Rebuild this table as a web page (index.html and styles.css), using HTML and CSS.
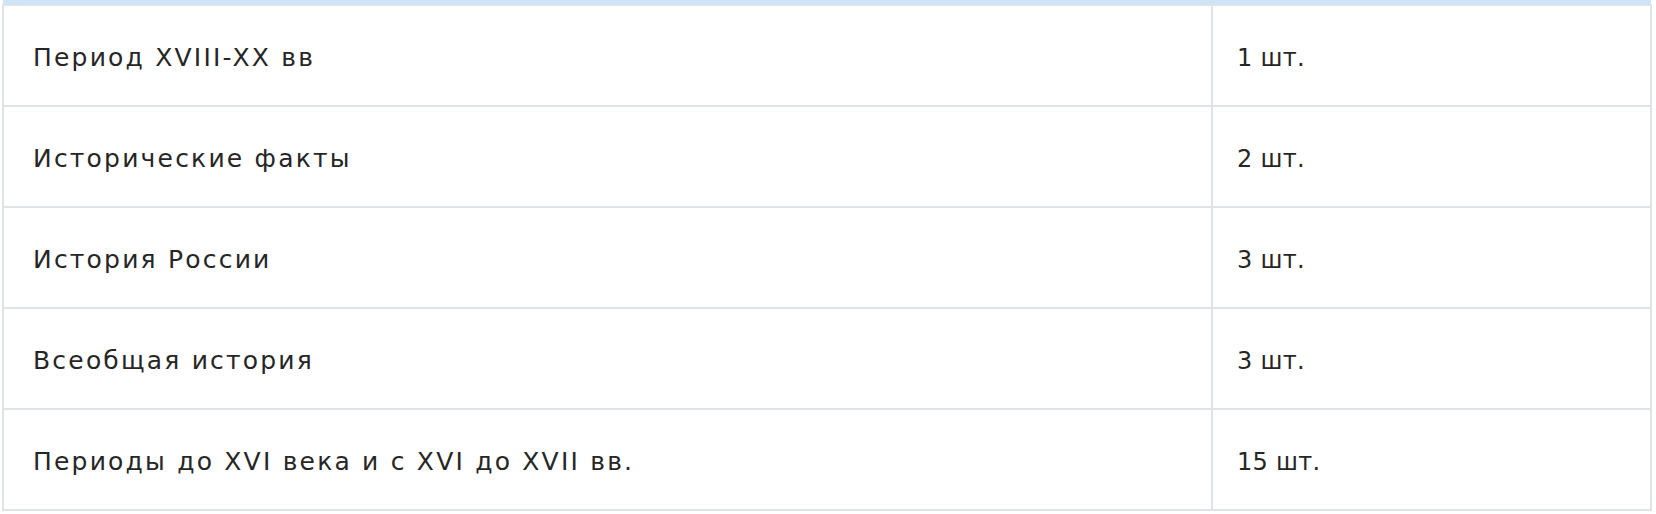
FILE: index.html
```html
<!DOCTYPE html>
<html lang="ru">
<head>
    <meta charset="UTF-8">
    <meta name="viewport" content="width=device-width, initial-scale=1.0">
    <title>Разделы</title>
    <link rel="stylesheet" href="styles.css">
</head>
<body>
<table class="sections">
    <colgroup>
        <col class="col-name">
        <col class="col-count">
    </colgroup>
    <thead>
    <tr class="head">
        <th></th>
        <th></th>
    </tr>
    </thead>
    <tbody>
    <tr>
        <td class="name">Период XVIII-XX вв</td>
        <td class="count">1 шт.</td>
    </tr>
    <tr>
        <td class="name">Исторические факты</td>
        <td class="count">2 шт.</td>
    </tr>
    <tr>
        <td class="name">История России</td>
        <td class="count">3 шт.</td>
    </tr>
    <tr>
        <td class="name">Всеобщая история</td>
        <td class="count">3 шт.</td>
    </tr>
    <tr>
        <td class="name">Периоды до XVI века и с XVI до XVII вв.</td>
        <td class="count">15 шт.</td>
    </tr>
    </tbody>
</table>
</body>
</html>
```

FILE: styles.css
```css
body {
    margin: 0;
    background: #fff;
    font-family: "DejaVu Sans", sans-serif;
    color: #262626;
}

.sections {
    margin-left: 2px;
    width: 1650px;
    border-collapse: collapse;
    table-layout: fixed;
}

.col-name {
    width: 1209px;
}

.head th {
    height: 4px;
    padding: 0;
    background: #cfe3f8;
    border: none;
}

td {
    height: 95px;
    padding: 4px 27px 0 29px;
    border: 2px solid #dfe3e8;
    font-size: 24px;
    text-align: left;
}

.name {
    font-size: 25px;
    letter-spacing: 2.2px;
}

.count {
    padding-left: 24px;
    letter-spacing: 0.3px;
}
```
